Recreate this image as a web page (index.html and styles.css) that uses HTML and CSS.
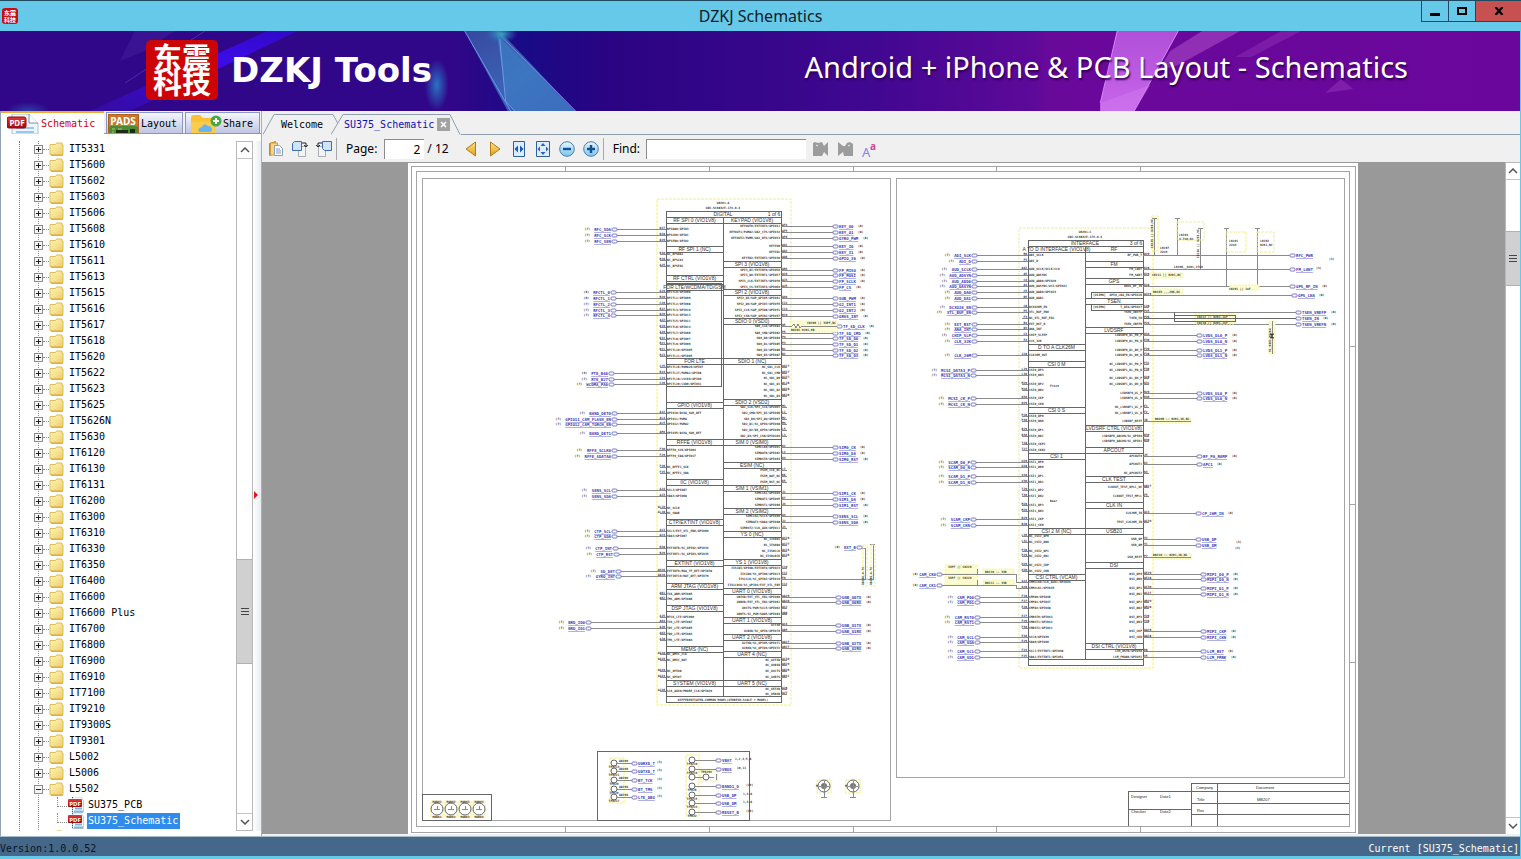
FILE: index.html
```html
<!DOCTYPE html>
<html lang="en">
<head>
<meta charset="utf-8">
<title>DZKJ Schematics</title>
<link rel="stylesheet" href="styles.css">
</head>
<body>
<svg class="defs" aria-hidden="true">
  <defs>
    <linearGradient id="fold" x1="0" y1="0" x2="1" y2="1"><stop offset="0" stop-color="#fff6c4"/><stop offset="1" stop-color="#f0cd62"/></linearGradient>
    <linearGradient id="gold" x1="0" y1="0" x2="0" y2="1"><stop offset="0" stop-color="#fbe08a"/><stop offset="1" stop-color="#dfa21c"/></linearGradient>
    <linearGradient id="sky" x1="0" y1="0" x2="0" y2="1"><stop offset="0" stop-color="#e8f6fd"/><stop offset="1" stop-color="#7cc4ee"/></linearGradient>
    <linearGradient id="red" x1="0" y1="0" x2="0" y2="1"><stop offset="0" stop-color="#e0383c"/><stop offset="1" stop-color="#a00810"/></linearGradient>
  </defs>
  <symbol id="i-folder" viewBox="0 0 15 14"><path d="M1 2.500h5.500l1-1.500h5.500v2h1v9.500h-13z" fill="url(#fold)" stroke="#e0bd55"/><path d="M2 13.500h12" stroke="#d9b44a"/></symbol>
  <symbol id="i-pdf" viewBox="0 0 16 16"><path d="M4.500 0v15.500h11v-12l-3-3.500z" fill="#fff" stroke="#b8d4e8"/><path d="M7 11.500h7M6 14.500h9" stroke="#7fb2dc" stroke-width="2"/><path d="M4.500 0v15" stroke="#555" stroke-dasharray="1 1"/><rect x="0" y="2" width="14" height="8" rx="1" fill="url(#red)"/><text x="7" y="9" font-size="6" font-weight="bold" text-anchor="middle" fill="#fff" font-family="Noto Sans">PDF</text></symbol>
  <symbol id="i-up" viewBox="0 0 10 6"><path d="M1 5l4-4 4 4" fill="none" stroke="#555" stroke-width="1.500"/></symbol>
</svg>

<div class="app">
  <header class="titlebar">
    <span class="mini-logo"><span>东震</span><span>科技</span></span>
    <h1 class="title">DZKJ Schematics</h1>
    <div class="winbtns">
      <button class="wb" aria-label="Minimize"><svg width="10" height="10"><path d="M0 7h10v3H0z"/></svg></button>
      <button class="wb wb-max" aria-label="Maximize"><svg width="10" height="8"><path d="M1 1h8v6H1z" fill="none" stroke="#000" stroke-width="2"/></svg></button>
      <button class="wb wb-close" aria-label="Close"><svg width="10" height="8"><path d="M1.500 0l7 8M8.500 0l-7 8" stroke="#000" stroke-width="2.200"/></svg></button>
    </div>
  </header>

  <div class="banner">
    <svg class="banner-art" viewBox="0 0 1521 80" preserveAspectRatio="none" aria-hidden="true">
      <defs>
        <linearGradient id="bg"><stop offset="0" stop-color="#300788"/><stop offset=".3" stop-color="#300788"/><stop offset=".345" stop-color="#190a86"/><stop offset=".4" stop-color="#2a0482"/><stop offset=".5" stop-color="#36068a"/><stop offset=".57" stop-color="#400790"/><stop offset=".68" stop-color="#5d0999"/><stop offset=".69" stop-color="#69099a"/><stop offset="1" stop-color="#6a069c"/></linearGradient>
        <linearGradient id="beam" x1="1" y1="0" x2="0" y2="1"><stop offset="0" stop-color="#3208c4"/><stop offset=".35" stop-color="#3b0ce6"/><stop offset="1" stop-color="#340ba0"/></linearGradient>
        <linearGradient id="tri" x1="0" y1="0" x2="1" y2="1"><stop offset="0" stop-color="#36489e"/><stop offset=".55" stop-color="#3c63b6"/><stop offset="1" stop-color="#3b3fa6"/></linearGradient>
        <linearGradient id="pink" x1="0" y1="0" x2="0" y2="1"><stop offset="0" stop-color="#b04fd8"/><stop offset="1" stop-color="#c765ea"/></linearGradient>
        <radialGradient id="glow"><stop offset="0" stop-color="#2a72c4"/><stop offset="1" stop-color="#2a72c4" stop-opacity="0"/></radialGradient>
        <radialGradient id="teal"><stop offset="0" stop-color="#38a8b8"/><stop offset="1" stop-color="#2a72c4" stop-opacity="0"/></radialGradient>
      </defs>
      <rect width="1521" height="80" fill="url(#bg)"/>
      <path d="M268 0h30L130 80H90z" fill="url(#beam)"/>
      <path d="M135 0h40l-30 20-25 10z" fill="#3f1c9a" opacity=".6"/>
      <path d="M205 0L125 52" stroke="#5a3cb4" opacity=".7"/>
      <ellipse cx="28" cy="80" rx="22" ry="9" fill="url(#glow)" opacity=".5"/>
      <ellipse cx="437" cy="54" rx="12" ry="26" fill="url(#glow)"/>
      <path d="M465 0h35l76 80h-68z" fill="url(#tri)"/>
      <path d="M497 0l10 70 8 10h60L500 6z" fill="#3d7cc4" opacity=".75"/>
      <path d="M465 0l46 80M500 4l76 76M500 8l6 62 9 10" stroke="#6d9be8" fill="none"/>
      <ellipse cx="502" cy="3" rx="16" ry="9" fill="url(#teal)"/>
      <path d="M1118 0h61l-44 80h-34v-8z" fill="url(#pink)"/>
      <path d="M1118 0l-17 72M1179 0l-44 80" stroke="#d886f4" fill="none"/>
      <path d="M1101 72l50-18-16 26h-34z" fill="#d27af0" opacity=".5"/>
      <path d="M1203 0h38l-62 34-20 6 12-20z" fill="#9a38bc" opacity=".8"/>
      <path d="M1282 0h20l-50 26h-16z" fill="#8424ae" opacity=".7"/>
      <path d="M1342 48l12 10-28 4z" fill="#8a28b4" opacity=".7"/>
    </svg>
    <div class="brand">
      <div class="logo" lang="zh"><span>东震</span><span>科技</span></div>
      <strong class="brand-name">DZKJ Tools</strong>
    </div>
    <p class="tagline">Android + iPhone &amp; PCB Layout - Schematics</p>
  </div>

  <main class="main">
    <aside class="side">
      <div class="modes" role="tablist">
        <button class="mode mode-on" role="tab" aria-selected="true">
          <svg width="32" height="20" viewBox="0 0 32 20"><path d="M5 0h17l9 9v11H5z" fill="#eef6fc" stroke="#a9c4da"/><path d="M22 0v9h9" fill="#fff" stroke="#6f94b4"/><path d="M9 14h18M9 18h18" stroke="#9ac8ea" stroke-width="2"/><rect x="0" y="3" width="19" height="11" rx="2" fill="url(#red)" stroke="#8c0c10"/><text x="10" y="12" font-size="8" font-weight="bold" text-anchor="middle" fill="#fff" font-family="Noto Sans">PDF</text></svg>
          Schematic</button>
        <button class="mode mode-pads" role="tab">
          <svg width="31" height="20" viewBox="0 0 31 20"><rect width="31" height="20" fill="#b5601c"/><rect x="1" y="1" width="29" height="12" fill="#c8772a"/><rect x="2" y="12" width="27" height="8" fill="#4d8a34"/><path d="M8 20v-4h12v4zM22 15h5v4h-5z" fill="#1e2c1a"/><path d="M4 15h3M10 15h4M4 18h2" stroke="#a8d070"/><text x="15" y="11" font-size="10" font-weight="bold" text-anchor="middle" fill="#fff" font-family="Noto Sans">PADS</text></svg>
          Layout</button>
        <button class="mode mode-share" role="tab">
          <svg width="32" height="20" viewBox="0 0 32 20"><path d="M1 4q0-3 3-3h6l3 3h10q3 0 3 3v13H1z" fill="#f8c136"/><path d="M1 8l25-1v13H1z" fill="#fbcb4c"/><path d="M9 18q-2-4 3-5 2-5 6-1 4 0 4 4 0 2-2 2z" fill="#68b4f0"/><circle cx="26" cy="7" r="5.500" fill="#46a83e"/><path d="M26 4v6M23 7h6" stroke="#fff" stroke-width="2"/></svg>
          Share</button>
      </div>
      <div class="treebox">
        <ul class="tree" id="tree" role="tree"></ul>
        <div class="scroll">
          <button class="sb" aria-label="Scroll up"><svg width="10" height="6"><use href="#i-up"/></svg></button>
          <div class="track"><div class="before-tree"></div><div class="thumb thumb-tree"><i></i><i></i><i></i></div><div class="after-tree"></div></div>
          <button class="sb" aria-label="Scroll down"><svg class="flip" width="10" height="6"><use href="#i-up"/></svg></button>
        </div>
        <div class="splitter"><svg width="5" height="8"><path d="M1 0l4 4-4 4z" fill="#e01818"/></svg></div>
      </div>
    </aside>

    <section class="work">
      <div class="docs" role="tablist">
        <button class="doc" role="tab">
          <svg class="doc-edge" viewBox="0 0 76 21" preserveAspectRatio="none"><path d="M0 20.500l11-20h59l6 11" fill="#f0f0f0" stroke="#8f9fae"/></svg>
          <span>Welcome</span></button>
        <button class="doc doc-on" role="tab" aria-selected="true">
          <svg class="doc-edge" viewBox="0 0 130 21" preserveAspectRatio="none"><path d="M0 20.500l12-20h107l10 20" fill="#f0f0f0" stroke="#8f9fae"/></svg>
          <span>SU375_Schematic</span><i class="doc-x"><svg width="7" height="7"><path d="M1 1l5 5M6 1l-5 5" stroke="#fff" stroke-width="1.500"/></svg></i></button>
        <div class="doc-fill"></div>
      </div>
      <div class="tools">
        <button class="tool" aria-label="Open"><svg width="16" height="16"><path d="M1.500 2.500l6-2v12l-6 2z" fill="#f1bd5a" stroke="#c88a2c"/><path d="M2.500 2h7v12h-7z" fill="#f8d384" stroke="#d09a3c"/><path d="M6.500 4.500h5l3 3v7h-8z" fill="#fff" stroke="#8e9cb4"/><path d="M8 8h4M8 10h5M8 12h5" stroke="#7c96c0"/></svg></button>
        <button class="tool" aria-label="Rotate right"><svg width="16" height="16"><path d="M6.500 5.500h7v10h-7z" fill="#f4f4f4" stroke="#a8acb4"/><path d="M.500 2.500l2-2h7v9h-9z" fill="#cfe4f8" stroke="#3d6fae"/><path d="M10 2h4v3M12 4l2 2 2-2" fill="none" stroke="#222"/></svg></button>
        <button class="tool" aria-label="Rotate left"><svg width="16" height="16"><path d="M2.500 5.500h7v10h-7z" fill="#f4f4f4" stroke="#a8acb4"/><path d="M6.500 .500h9v9h-7l-2-2z" fill="#cfe4f8" stroke="#3d6fae"/><path d="M6 2H2v3M0 4l2 2 2-2" fill="none" stroke="#222"/></svg></button>
        <span class="sep"></span>
        <label class="lbl" for="pg">Page:</label>
        <input class="in in-page" id="pg" value="2">
        <span class="lbl of">/ 12</span>
        <button class="tool" aria-label="Previous page"><svg width="12" height="16"><path d="M10.500 1v14L1 8z" fill="url(#gold)" stroke="#b07d14"/></svg></button>
        <button class="tool" aria-label="Next page"><svg width="12" height="16"><path d="M1.500 1v14L11 8z" fill="url(#gold)" stroke="#b07d14"/></svg></button>
        <button class="tool" aria-label="Fit width"><svg width="14" height="16"><path d="M1.500 .500h11v15h-11z" fill="#dcecfa" stroke="#2f5f9e"/><path d="M6 4.500v7L2.500 8zM8 4.500v7L11.500 8z" fill="#1c58b0"/></svg></button>
        <button class="tool" aria-label="Fit page"><svg width="14" height="16"><path d="M.500 .500h13v15H.500z" fill="#dcecfa" stroke="#2f5f9e"/><path d="M7 2l2.500 3h-5zM7 14l2.500-3h-5zM1.500 8l2.500-2.500v5zM12.500 8L10 5.500v5z" fill="#2a62b4"/></svg></button>
        <button class="tool" aria-label="Zoom out"><svg width="16" height="16"><circle cx="8" cy="8" r="7.300" fill="url(#sky)" stroke="#4a7fae"/><path d="M4 8h8" stroke="#0f4f96" stroke-width="2.400"/></svg></button>
        <button class="tool" aria-label="Zoom in"><svg width="16" height="16"><circle cx="8" cy="8" r="7.300" fill="url(#sky)" stroke="#4a7fae"/><path d="M4 8h8M8 4v8" stroke="#0f4f96" stroke-width="2.400"/></svg></button>
        <span class="sep"></span>
        <label class="lbl" for="find">Find:</label>
        <input class="in in-find" id="find">
        <button class="tool" aria-label="Find previous"><svg width="16" height="16"><path d="M0 2l2-1 3 1 4-1 2 4 4-4v14l-4-4-2 4H0z" fill="#9c9c9c"/><path d="M3 4l2 1" stroke="#f0f0f0"/></svg></button>
        <button class="tool" aria-label="Find next"><svg width="16" height="16"><path d="M16 3l-3-2-3 1-2 3-2 0-5-4v14l5-4 1 4h9z" fill="#9c9c9c"/><path d="M11 5l2-1" stroke="#f0f0f0"/></svg></button>
        <button class="tool" aria-label="Match case"><svg width="18" height="18"><text x="1" y="16" font-size="13" fill="#8a80e8" font-family="Noto Sans">A</text><text x="9" y="9" font-size="10" font-weight="bold" fill="#c8489c" font-family="Noto Sans">a</text></svg></button>
      </div>
      <div class="view">
        <div class="canvas"><svg class="sheet" id="sheet" viewBox="408 163 950 671" role="img" aria-label="SU375 schematic, page 2"></svg></div>
        <div class="scroll scroll-doc">
          <button class="sb" aria-label="Page up"><svg width="10" height="6"><use href="#i-up"/></svg></button>
          <div class="track"><div class="before-doc"></div><div class="thumb thumb-doc"><i></i><i></i><i></i></div><div class="after-doc"></div></div>
          <button class="sb" aria-label="Page down"><svg class="flip" width="10" height="6"><use href="#i-up"/></svg></button>
        </div>
      </div>
    </section>
  </main>

  <footer class="status"><span>Version:1.0.0.52</span><span class="cur">Current [SU375_Schematic]</span></footer>
</div>
<script src="sheet.js"></script>
</body>
</html>
```

FILE: styles.css
```css
* { box-sizing: border-box; }
body { margin: 0; font: 10px/16px "DejaVu Sans Mono", monospace; color: #000; background: #66c9e9; }
button { font: inherit; color: inherit; border: 0; padding: 0; margin: 0; background: none; }
svg { display: block; flex: none; }
.defs { position: absolute; width: 0; height: 0; }
.app { height: 100vh; display: flex; flex-direction: column; border-bottom: 3px solid #66c9e9; }

.titlebar { height: 31px; flex: none; display: flex; align-items: center; border-top: 1px solid #1d4a60; background: #66c9e9; }
.mini-logo { width: 16px; height: 16px; margin-left: 2px; border-radius: 3px; background: #c80c10; color: #fff; display: flex; flex-direction: column; align-items: center; justify-content: center; font: bold 6px/7px "Noto Sans CJK SC", sans-serif; }
.title { flex: 1; margin: 0 0 0 82px; text-align: center; font: 400 16px/22px "Noto Sans", sans-serif; color: #0d1c28; }
.winbtns { display: flex; align-self: flex-start; height: 21px; }
.wb { width: 28px; display: grid; place-items: center; border: 1px solid #1d4a60; border-top: 0; }
.wb-max { width: 27px; border-left: 0; }
.wb-close { width: 45px; background: #c75050; border-left: 0; border-right: 0; }

.banner { position: relative; height: 80px; flex: none; display: flex; justify-content: space-between; align-items: center; margin-right: 1px; padding: 0 112px 2px 146px; color: #fff; }
.banner-art { position: absolute; inset: 0; width: 100%; height: 100%; }
.brand { position: relative; display: flex; align-items: center; gap: 13px; }
.logo { width: 72px; height: 60px; border-radius: 5px; background: #cc0406; display: flex; flex-direction: column; align-items: center; justify-content: center; font: bold 29px/25px "Noto Sans CJK SC", sans-serif; padding-bottom: 2px; }
.brand-name { font: bold 34px/44px "DejaVu Sans", sans-serif; }
.tagline { position: relative; margin: 0 0 6px; font: 400 29px/40px "Noto Sans", sans-serif; text-shadow: 1px 2px 2px #300050; }

.main { flex: 1; min-height: 0; display: flex; margin-right: 1px; background: #f0f0f0; }
.side { width: 261px; flex: none; display: flex; flex-direction: column; border-left: 1px solid #8ea3b5; }
.modes { height: 23px; display: flex; align-items: flex-end; gap: 2px; border-bottom: 1px solid #8a98b0; }
.mode { height: 21px; display: flex; align-items: center; gap: 2px; overflow: hidden; border: 1px solid #8a98c0; border-bottom: 0; background: linear-gradient(#f4f5fc, #c0c6e2); padding: 2px 4px 0 1px; }
.mode-on { height: 23px; width: 103px; margin-bottom: -1px; color: #c80014; background: #fff; border: 0; border-top: 2px solid #eeab32; padding: 1px 0 0 6px; }
.mode-pads { width: 77px; gap: 2px; }
.mode-share { width: 75px; padding-left: 4px; gap: 1px; }
.treebox { flex: 1; min-height: 0; display: flex; background: #fff; padding: 7px 0 5px; }
.tree { flex: 1; min-width: 0; margin: 0 0 0 18px; padding: 0; list-style: none; overflow: hidden; border-left: 1px dotted #777; }
.row { height: 16px; display: flex; align-items: center; margin-left: 14px; background: linear-gradient(#888 50%, transparent 0) 4px 0 / 1px 2px repeat-y; }
.exp { width: 9px; height: 9px; line-height: 0; border: 1px solid #8c8c8c; background: #f4f4f4; display: grid; place-items: center; }
.dash { width: 6px; border-top: 1px dotted #888; }
.row .name { margin-left: 4px; height: 16px; line-height: 16px; padding: 0 1px; }
.leaf .stub { width: 42px; padding-left: 23px; height: 16px; }
.stub::after { content: ""; display: block; height: 9px; width: 11px; border-left: 1px dotted #888; border-bottom: 1px dotted #888; margin-bottom: 7px; }
.leaf .icon { margin-left: -8px; }
.leaf .name { margin-left: 3px; }
.row .picked { padding-right: 2px; background: #2f8bec; color: #fff; outline: 1px dotted #c46a10; outline-offset: -1px; }
.scroll { width: 17px; flex: none; display: flex; flex-direction: column; background: #fff; border: 1px solid #b8b8b8; }
.sb { height: 16px; display: grid; place-items: center; background: #fff; }
.flip { transform: rotate(180deg); }
.track { flex: 1; display: flex; flex-direction: column; border: 1px solid #c4c4c4; border-width: 1px 0; }
.before-tree { flex: 402; }
.after-tree { flex: 150; }
.before-doc { flex: 52; }
.after-doc { flex: 538; }
.thumb { background: #d0d0d0; border: 1px solid #b0b0b0; border-width: 1px 0; display: flex; flex-direction: column; align-items: center; justify-content: center; gap: 2px; }
.thumb i { width: 8px; height: 1px; background: #444; }
.thumb-tree { flex: 104; }
.thumb-doc { flex: 53; }
.splitter { width: 8px; flex: none; display: grid; place-items: start; align-items: center; padding-top: 18px; background: linear-gradient(90deg, #fff, #e8ecf0); }

.work { flex: 1; min-width: 0; display: flex; flex-direction: column; border-left: 1px solid #a8b0b8; }
.docs { height: 24px; flex: none; display: flex; align-items: flex-end; padding-left: 1px; }
.doc { position: relative; width: 68px; height: 21px; padding-left: 18px; text-align: left; white-space: nowrap; }
.doc span, .doc-x { position: relative; }
.doc-edge { position: absolute; left: 0; top: 0; width: 76px; height: 21px; }
.doc-on { width: 130px; padding-left: 13px; color: #0a10b4; display: flex; align-items: center; gap: 3px; }
.doc-on .doc-edge { width: 130px; }
.doc-x { width: 13px; height: 13px; background: #a2a2a2; display: grid; place-items: center; }
.doc-fill { flex: 1; border-bottom: 1px solid #8f9fae; }
.tools { height: 27px; flex: none; display: flex; align-items: center; gap: 8px; padding: 0 6px; font: 12px/18px "Noto Sans", sans-serif; }
.tool { width: 16px; height: 16px; display: grid; place-items: center; }
.sep { width: 1px; height: 22px; margin-left: -4px; background: #a9a9a9; }
.in { height: 20px; border: 0; border-top: 1px solid #8c8c8c; border-left: 1px solid #8c8c8c; background: #fff; font: inherit; padding: 0 4px; outline: 0; }
.in-page { width: 40px; text-align: right; margin-left: -1px; }
.in-find { width: 160px; margin: 0 -1px 0 -2px; }
.of { margin: 0 6px 0 -5px; white-space: nowrap; }
.sep + .lbl { margin-left: 1px; }
.view { flex: 1; min-height: 0; display: flex; background: #999; margin-bottom: 2px; }
.canvas { flex: 1; min-width: 0; display: flex; justify-content: center; padding: 1px 2px 0 0; }
.sheet { height: 100%; max-width: 100%; background: #fff; font-family: "DejaVu Sans Mono", monospace; }
.scroll-doc { width: 15px; border-width: 1px 0 0 1px; }

.frame { fill: none; stroke: #a4a4a4; shape-rendering: crispEdges; }
.dark { stroke: #666; }
.smooth { shape-rendering: auto; }
.wire { fill: none; stroke: #8a8a8a; shape-rendering: crispEdges; }
.hot { fill: none; stroke: #f0f08c; stroke-dasharray: 3 1; }
.mark { fill: #fcfcd0; stroke: #f4f4a8; stroke-dasharray: 2 1; }
.head { font: 5px "Liberation Sans", sans-serif; fill: #333; text-anchor: middle; }
.pin { font-size: 3px; font-weight: bold; fill: #333; }
.net { font-size: 4px; font-weight: bold; fill: #3a3ab4; text-decoration: underline; }
.tag { fill: #fff; stroke: #7c7cc8; }
.end { text-anchor: end; }
.mid { text-anchor: middle; }
.sign { font: 4px "Liberation Sans", sans-serif; fill: #222; }

.status { height: 20px; flex: none; display: flex; justify-content: space-between; align-items: center; margin-right: 1px; padding: 5px 1px 0 0; border-top: 1px solid #a8bccb; background: #456789; color: #0a1420; }
.cur { color: #fff; }
```

FILE: sheet.js
```js
// Tree of device folders
const folders = "IT5331,IT5600,IT5602,IT5603,IT5606,IT5608,IT5610,IT5611,IT5613,IT5615,IT5616,IT5617,IT5618,IT5620,IT5622,IT5623,IT5625,IT5626N,IT5630,IT6120,IT6130,IT6131,IT6200,IT6300,IT6310,IT6330,IT6350,IT6400,IT6600,IT6600 Plus,IT6700,IT6800,IT6900,IT6910,IT7100,IT9210,IT9300S,IT9301,L5002,L5006,L5502".split(",");
const folderRow = (name, open) => `<li class="row" role="treeitem"><button class="exp" aria-label="Toggle"><svg width="7" height="7"><path d="M1 3.5h5${open ? "" : "M3.5 1v5"}" stroke="#222"/></svg></button><span class="dash"></span><svg width="15" height="14"><use href="#i-folder"/></svg><span class="name">${name}</span></li>`;
const fileRow = (name, on) => `<li class="row leaf" role="treeitem"><span class="stub"></span><svg class="icon" width="16" height="16"><use href="#i-pdf"/></svg><span class="name${on ? " picked" : ""}">${name}</span></li>`;
document.getElementById("tree").innerHTML =
  folders.map(n => folderRow(n, n === "L5502")).join("") +
  fileRow("SU375_PCB") + fileRow("SU375_Schematic", true) + folderRow("");

// Schematic sheet
const out = [];
const path = (d, c) => out.push(`<path class="${c}" d="${d}"/>`);
const box = (x, y, x2, y2, c = "frame") => out.push(`<rect class="${c}" x="${x}" y="${y}" width="${x2 - x}" height="${y2 - y}"/>`);
const text = (x, y, s, c) => out.push(`<text class="${c}" x="${x}" y="${y}">${s}</text>`);
const ring = (x, y, r) => out.push(`<circle class="frame dark smooth" cx="${x}" cy="${y}" r="${r}"/>`);
const vtext = (x, y, s) => out.push(`<text class="pin" transform="translate(${x} ${y}) rotate(-90)">${s}</text>`);
const tag = (x, y) => out.push(`<rect class="tag" x="${x}" y="${y - 1}" width="5" height="3" rx="1"/>`);
const span = s => Math.ceil(s.length * 2.41);

box(411, 166, 1355, 832); box(416, 171, 1349, 826);
box(422, 178, 890, 820); box(896, 178, 1344, 777);
for (const x of [565, 709, 853, 996, 1140]) path(`M${x} 166v5M${x} 826v6`, "frame");
for (const y of [346, 504, 662]) path(`M1349 ${y}h6`, "frame");

function chip(o) {
  const { x, x2, mid, top, end } = o;
  box(x - 9, top - 12, x2 + 10, end + 3, "hot");
  text(mid, top - 7, o.ref, "pin mid"); text(mid, top - 2, o.part, "pin mid");
  box(x, top, x2, end, "frame dark");
  path(`M${x} ${top + 6}H${x2}M${mid} ${top + 6}V${end - 6}M${x} ${end - 6}H${x2}`, "frame dark");
  text(mid, top + 5, o.name, "head"); text(x2 - 7, top + 5, o.count, "head");
  for (const [side, list] of [["L", o.headsL], ["R", o.headsR]])
    for (const [y, s] of list) {
      const a = side === "L" ? x : mid, b = side === "L" ? mid : x2;
      box(a, y - 3, b, y + 3, "frame dark"); text((a + b) / 2, y + 2, s, "head");
    }
  for (const [y, label, ball, net, tx, page] of o.left) {
    text(x + 1, y + 1, label, "pin"); text(x - 1, y, ball, "pin end");
    path(`M${net ? tx + 5 : x - 6} ${y}H${x}`, "wire");
    if (net) { tag(tx, y); text(tx - 1, y + 2, net, "net end"); text(tx - 5 - span(net), y + 1, page || "(7)", "pin end"); }
  }
  for (const [y, label, ball, net, tx, page] of o.right) {
    text(x2 - 1, y + 1, label, "pin end"); text(x2 + 1, y, ball, "pin");
    path(`M${x2} ${y}H${net ? tx : x2 + 6}`, "wire");
    if (net) { tag(tx, y); text(tx + 6, y + 2, net, "net"); text(tx + 10 + span(net), y + 1, page || "(8)", "pin"); }
  }
}

chip({
  x: 666, x2: 781, mid: 723, top: 211, end: 702, ref: "U0201-A", part: "UDC-SC9832E-174-0.4", name: "DIGITAL", count: "1 of 6",
  headsL: [[220, "RF SPI 0 (VIO1V8)"], [249, "RF SPI 1 (NC)"], [278, "RF CTRL (VIO1V8)"], [287, "FOR LTE/WCDMA/TD/GSM"], [361, "FOR LTE"], [405, "GPIO (VIO1V8)"], [442, "RFFE (VIO1V8)"], [482, "IIC (VIO1V8)"], [522, "CTP/EXTINT (VIO1V8)"], [563, "EXTINT (VIO1V8)"], [586, "ARM JTAG (VIO1V8)"], [608, "DSP JTAG (VIO1V8)"], [649, "MEMS (NC)"], [683, "SYSTEM (VIO1V8)"]],
  headsR: [[220, "KEYPAD (VIO1V8)"], [264, "SPI 3 (VIO1V8)"], [292, "SPI 2 (VIO1V8)"], [321, "SDIO 0 (VSD0)"], [361, "SDIO 1 (NC)"], [402, "SDIO 2 (VSD2)"], [442, "SIM 0 (VSIM0)"], [465, "ESIM (NC)"], [488, "SIM 1 (VSIM1)"], [511, "SIM 2 (VSIM2)"], [534, "YS 0 (NC)"], [562, "YS 1 (VIO1V8)"], [591, "UART 0 (VIO1V8)"], [620, "UART 1 (VIO1V8)"], [637, "UART 2 (VIO1V8)"], [654, "UART 4 (NC)"], [683, "UART 5 (NC)"]],
  left: [[229, "RFSDA0/GPIO3", "D27", "RFC_SDA", 612], [235, "RFSCK0/GPIO1", "D28", "RFC_SCK", 612], [241, "RFSEN0/GPIO2", "D29", "RFC_SEN", 612], [254, "NC_RFSDA1", "B30"], [260, "NC_RFSCK1", "B28"], [266, "NC_RFSEN1", "A25"], [292, "RFCTL0/GPIO06", "A19", "RFCTL_0", 611, "(6)"], [298, "RFCTL1/GPIO09", "B20", "RFCTL_1", 611, "(6)"], [304, "RFCTL2/GPIO08", "C20", "RFCTL_2", 611], [310, "RFCTL3/GPIO10", "B22", "RFCTL_3", 611], [315, "RFCTL4/GPIO13", "D20", "RFCTL_4", 611], [321, "RFCTL5/GPIO11", "A22"], [327, "RFCTL6/GPIO14", "D19"], [333, "RFCTL7/GPIO06", "A20"], [339, "RFCTL8/GPIO07", "D22"], [344, "RFCTL9/GPIO09", "B21"], [350, "RFCTL10/GPIO05", "D21"], [356, "RFCTL11/GPIO05", "B23"], [367, "RFCTL16/PWMA20/GPIO7", "C25"], [373, "RFCTL17/PWMA2/GPIO8", "B24", "PTE_B40", 609, "(9)"], [379, "RFCTL18/LVCK0/GPIO9", "C24", "RTE_B27", 609], [384, "RFCTL20/LVD0/GPIO31", "C26", "WCDMA_PA0", 609], [413, "GPIO10/DCXA_SWH_DET", "A22", "BAND_DET0", 612], [419, "GPIO11/PWMA", "AL4", "GPIO11_CAM_FLASH_EN", 612], [424, "GPIO12/PWMA2", "AL5", "GPIO12_CAM_TORCH_EN", 612], [433, "GPIO35/DCXA_SWH_DET", "AM4", "BAND_DET1", 612], [450, "RFFE0_SCK/GPIO04", "F30", "RFFE_SCLK0", 612], [456, "RFFE0_SDA/GPIO17", "F29", "RFFE_SDATA0", 612], [467, "NC_RFFE1_SCK", "F26"], [473, "NC_RFFE1_SDA", "F25"], [490, "SCL3/GPIO67", "AJ4", "SENS_SCL", 612], [496, "SDA3/GPIO68", "AJ3", "SENS_SDA", 612], [508, "NC_SCL6", "AL29"], [513, "NC_SDA6", "AL28"], [531, "SCL3/EXT_XTL_EN0/GPIO69", "AC3", "CTP_SCL", 612], [536, "SDA3/GPIO67", "AC4", "CTP_SDA", 612], [548, "EXTINT0/SC_GPIO2/GPIO34", "B28", "CTP_INT", 613], [554, "EXTINT1/SC_GPIO3/GPIO35", "B29", "CTP_RST", 614], [571, "EXTINT9/BUA_TF_DET/GPIO78", "AH26", "SD_DET", 616], [576, "EXTINT10/BAT_DET/GPIO79", "AD28", "GYRO_INT", 616], [594, "TCK_ARM/GPIO85", "AK1"], [599, "TMS_ARM/GPIO86", "AK2"], [617, "MTCK_LTE/GPIO90", "AJ5"], [622, "TCK_LTE/GPIO87", "AK4", "BRD_ID0", 586], [628, "TDI_LTE/GPIO85", "AJ6", "BRD_ID1", 586], [634, "TDO_LTE/GPIO83", "AG3"], [640, "TMS_LTE/GPIO84", "AJ8"], [654, "NC_DMIC_CLK", "AG28"], [660, "NC_DMIC_DAT", "AG29"], [671, "NC_GPIO8", "AG29"], [677, "NC_GPIO7", "AG24"], [691, "CLK_AUX0/PROBE_CLK/GPIO29", "AJ26"]],
  right: [[226, "KEYOUT0/EXTINT3/GPIO31", "AF4", "KEY_O0", 833], [232, "KEYOUT1/PWMA2/UA2_CTS/GPIO32", "AF5", "KEY_O1", 833], [238, "KEYOUT2/PWMB/UA2_RTS/GPIO33", "AF6", "GYRO_PWM", 833], [246, "KEYIN0", "AG1", "KEY_I0", 833], [252, "KEYIN1", "AG2", "KEY_I1", 833], [258, "KEYIN2/EXTINT2/GPIO30", "AG6", "GPIO_30", 833], [270, "SPI3_DI/EXTINT0/GPIO56", "AB5", "FP_MISO", 833], [275, "SPI3_DO/EXTINT1/GPIO57", "A10", "FP_MOSI", 833], [281, "SPI3_CLK/EXTINT3/GPIO59", "AJ3", "FP_SCLK", 833], [287, "SPI3_CS/EXTINT4/GPIO60", "AJ5", "FP_CS", 833], [298, "SPI2_DI/SWP_GPIO5/GPIO61", "AH4", "SUB_PWM", 833], [304, "SPI2_DO/SWP_GPIO7/GPIO55", "C12", "G2_INT1", 833], [310, "SPI2_CLK/SWP_GPIO8/GPIO51", "C13", "G2_INT2", 833], [316, "SPI2_CSN/SWP_GPIO2/GPIO57", "B19", "GRVS_INT", 833], [326, "SD0_CLK/GPIO83", "N5", "TF_SD_CLK", 837], [333, "SD0_CMD/GPIO82", "P5", "TF_SD_CMD", 833], [338, "SD0_D0/GPIO84", "P4", "TF_SD_D0", 833], [344, "SD0_D1/GPIO85", "P3", "TF_SD_D1", 833], [350, "SD0_D2/GPIO86", "R1", "TF_SD_D2", 833], [355, "SD0_D3/GPIO87", "R2", "TF_SD_D3", 833], [367, "NC_SD1_CLK", "AG27"], [373, "NC_SD1_CMD", "AH27"], [378, "NC_SD1_D0", "AJ27"], [384, "NC_SD1_D1", "AL28"], [390, "NC_SD1_D2", "AG28"], [396, "NC_SD1_D3", "AK28"], [407, "SD2_CLK/SPI_CLK/GPIO95", "M3"], [413, "SD2_CMD/SPI_DI/GPIO96", "L1"], [419, "SD2_D0/SPI_DO/GPIO97", "M2"], [424, "SD2_D1/SC_GPIO/GPIO98", "M4"], [430, "SD2_D2/DX_GPIO/GPIO99", "L5"], [436, "SD2_D3/SPI_CSN/GPIO100", "L3"], [447, "SIMCLK0/GPIO01", "K2", "SIM0_CK", 833], [453, "SIMDAT0/GPIO02", "L2", "SIM0_DA", 833], [459, "SIMRST0/GPIO03", "K4", "SIM0_RST", 833], [470, "ESIM_CLK_NC", "L7"], [476, "ESIM_DAT_NC", "K6"], [482, "ESIM_RST_NC", "K5"], [493, "SIMCLK1/GPIO04", "J1", "SIM1_CK", 833], [499, "SIMDAT1/GPIO05", "K7", "SIM1_DA", 833], [505, "SIMRST1/GPIO06", "J4", "SIM1_RST", 833], [516, "SIMCLK2/SCL4/GPIO09", "G4", "SENS_SCL", 833], [522, "SIMDAT2/SDA4/GPIO08", "J2", "SENS_SDA", 833], [528, "SIMRST2/CLK_AUX/GPIO11", "J3"], [539, "NC_IIS0DI", "AC29"], [545, "NC_IIS0DO", "AC27"], [551, "NC_IIS0CLK", "AC24"], [556, "NC_IIS0LRCK", "AC26"], [568, "IIS1DI/GPIO8/EXTINT4/GPIO23", "C10"], [574, "IIS1DO/SC_GPIO9/GPIO13", "C11"], [579, "IIS1CLK/SC_GPIO2/GPIO10", "E9"], [585, "IIS1LRCK/SC_GPIO3/EXT_XTL_EN5", "C12"], [597, "U0TXD/EXT_XTL_EN1/GPIO60", "AA29", "UAB_U0TX", 836], [602, "U0RXD/EXT_XTL_EN2/GPIO61", "AA28", "UAB_U0RX", 836], [608, "U0CTS/PWM/SCL5/GPIO62", "AC2"], [614, "U0RTS/SC_PWM/SDA5/GPIO64", "AD8"], [625, "U1TXD", "AC4", "UAB_U1TX", 836], [631, "U1RXD/SC_GPIO/GPIO70", "AD5", "UAB_U1RX", 836], [643, "U2TXD/SC_GPIO5/GPIO71", "AA27", "UAB_U2TX", 836], [648, "U2RXD/SC_GPIO4/GPIO72", "AB27", "UAB_U2RX", 836], [660, "NC_U4TXD", "AC30"], [665, "NC_U4RXD", "AK29"], [671, "NC_U4CTS", "AD29"], [677, "NC_U4RTS", "AD31"], [689, "NC_U5TXD", "A28"], [694, "NC_U5RXD", "A27"]]
});
text(723, 701, "DIFFERENTIATED-COMMON MODEL(UTHRESH-SCALE = MODEL)", "pin mid");
box(666, 283, 721, 386, "frame dark");
box(790, 321, 837, 332, "mark"); text(807, 324, "C0209 || 33PF,NC", "pin"); text(791, 331, "R0202  0201,0R", "pin");
path("M781 326h11l2 -2l2 4l2 -4l2 4l2 -2h35M781 579h92v-35M865 548v31M857 548h8M870 544h5", "wire");
box(863, 545, 867, 586, "hot"); box(871, 545, 875, 586, "hot");
vtext(864, 585, "R0208,4.7K"); vtext(872, 585, "R0209,4.7K");
tag(857, 547); text(856, 549, "EXT_B", "net end"); text(840, 548, "(8)", "pin end");

chip({
  x: 1028, x2: 1143, mid: 1085, top: 240, end: 665, ref: "U0201-C", part: "UDC-SC9832E-174-0.4", name: "INTERFACE", count: "3 of 6",
  headsL: [[249, "A TO D INTERFACE (VIO1V8)"], [347, "D TO A CLK26M"], [364, "CSI 0 M"], [410, "CSI 0 S"], [456, "CSI 1"], [531, "CSI 2 M (NC)"], [577, "CSI CTRL (VCAM)"]],
  headsR: [[249, "RF"], [264, "FM"], [281, "GPS"], [301, "TSEN"], [330, "LVDSRF"], [428, "LVDSRF CTRL (VIO1V8)"], [450, "APCOUT"], [479, "CLK TEST"], [505, "CLK IN"], [531, "USB20"], [565, "DSI"], [646, "DSI CTRL (VIO1V8)"]],
  left: [[255, "ADI_SCLK", "B6", "ADI_SCK", 972], [261, "ADI_D", "F5", "ADI_D", 972], [269, "AUD_SCLK/SCLK/CLK", "AG2", "AUD_SCLK", 972], [275, "AUD_ADSYNC", "A5", "AUD_ADSYN", 972], [281, "AUD_ADD0/GPIO20", "C4", "AUD_ADD0", 972], [286, "AUD_DASYNC/WCI/GPIO22", "A3", "AUD_DASYN", 972], [292, "AUD_DAD0/GPIO23", "C5", "AUD_DA0", 972], [298, "AUD_DAD1", "D5", "AUD_DA1", 972], [307, "DCXO26M_EN", "C8", "DCXO26_EN", 972], [312, "XTL_BUF_EN0", "P5", "XTL_BUF_EN", 972], [318, "NC_XTL_BUF_EN1", "F3"], [324, "EXT_RST_B", "B4", "EXT_RST", 972], [329, "ANA_INT", "D3", "ANA_INT", 972], [335, "CHIP_SLEEP", "C3", "CHIP_SLP", 972], [341, "CLK_32K", "E4", "CLK_32K", 972], [355, "CLK26M_OUT", "J28", "CLK_26M", 972], [370, "CSI0_DP3", "L29", "MCSI_DATA3_P", 971], [375, "CSI0_DN3", "L30", "MCSI_DATA3_N", 971], [384, "CSI0_DP2", "M29"], [390, "CSI0_DN2", "M28"], [398, "CSI0_CKP", "N30", "MCSI_CK_P", 971], [404, "CSI0_CKN", "N29", "MCSI_CK_N", 971], [416, "CSI0_DP0", "P28"], [421, "CSI0_DN0", "P30"], [430, "CSI0_DP1", "R29"], [436, "CSI0_DN1", "R30"], [444, "CSI0_CKP2", "T28"], [450, "CSI0_CKN2", "T27"], [462, "CSI1_DP0", "U29", "SCAM_D0_P", 971], [467, "CSI1_DN0", "U28", "SCAM_D0_N", 971], [476, "CSI1_DP1", "V28", "SCAM_D1_P", 971], [482, "CSI1_DN1", "V30", "SCAM_D1_N", 971], [490, "CSI1_DP2", "T29"], [496, "CSI1_DN2", "T30"], [505, "CSI1_DP3", "M28"], [511, "CSI1_DN3", "M29"], [519, "CSI1_CKP", "R29", "SCAM_CKP", 971], [525, "CSI1_CKN", "R28", "SCAM_CKN", 971], [536, "NC_CSI2_DP0", "L30"], [542, "NC_CSI2_DN0", "L31"], [551, "NC_CSI2_DP1", "P28"], [556, "NC_CSI2_DN1", "P29"], [565, "NC_CSI2_CKP", "H29"], [571, "NC_CSI2_CKN", "H30"], [582, "CMMCLK0/CLK_AUX1/GPIO44", "G24"], [588, "CMMCLK1/GPIO45", "G28"], [597, "CMPD0/GPIO46", "F28", "CAM_PD0", 975], [602, "CMPD1/GPIO47", "F27", "CAM_PD1", 975], [608, "CMPD2/GPIO48", "E28"], [617, "CMRST0/GPIO43", "E27", "CAM_RST0", 975], [622, "CMRST1/GPIO42", "F29", "CAM_RST1", 975], [628, "CMRST2/GPIO41", "F30"], [637, "SCL0/GPIO39", "E30", "CAM_SCL", 975], [642, "SDA0/GPIO40", "E29", "CAM_SDA", 975], [651, "SCL1/EXTINT1/GPIO48", "F24", "CAM_SC1", 975], [657, "SDA1/EXTINT1/GPIO51", "F25", "CAM_SD1", 975]],
  right: [[255, "RF_PWR_T", "D29", "RFC_PWR", 1290, " "], [269, "FM_LANT", "K28", "FM_LANT", 1290, " "], [275, "FM_SANT", "K29"], [286, "GNSS_RF_IN", "B28", "GPS_RF_IN", 1290], [295, "GPIO_LNA_EN/GPIO26", "AJ29", "GPS_LNA", 1292], [307, "T_DIG/GPIO27", "C28"], [312, "TSEN_VREFP", "P25", "TSEN_VREFP", 1296], [318, "TSEN_IN", "P26", "TSEN_IN", 1296], [324, "TSEN_VREFN", "P24", "TSEN_VREFN", 1296], [335, "LVDSRF0_DL_PN_P", "D30", "LVDS_DL0_P", 1197], [341, "LVDSRF0_DL_PN_N", "E30", "LVDS_DL0_N", 1197], [350, "LVDSRF0_DL_DH_P", "F29", "LVDS_DL1_P", 1197], [355, "LVDSRF0_DL_DH_N", "F28", "LVDS_DL1_N", 1197], [364, "NC_LVDSRF1_DL_PN_P", "F31"], [370, "NC_LVDSRF1_DL_PN_N", "F30"], [378, "NC_LVDSRF1_DL_DH_P", "G28"], [384, "NC_LVDSRF1_DL_DH_N", "G31"], [393, "LVDSRF0_UL_P", "B29", "LVDS_UL0_P", 1197], [398, "LVDSRF0_UL_N", "B30", "LVDS_UL0_N", 1197], [407, "NC_LVDSRF1_UL_P", "E1"], [413, "NC_LVDSRF1_UL_N", "F2"], [421, "LVDSRF_REXT", "J6"], [436, "LVDSRF0_ADCON/SC_GPIO0", "B30"], [441, "LVDSRF0_DACON/SC_GPIO1", "D30"], [456, "APCOUT0", "J5", "RF_PA_RAMP", 1197], [464, "APCOUT1", "K2", "APC1", 1197], [473, "NC_APCOUT2", "K4"], [487, "CLKOUT_TEST_DPLL_NC", "AD27"], [496, "CLKOUT_TEST_MPLL", "E5"], [513, "CLK26M_IN", "A13", "CP_26M_IN", 1196], [522, "TEST_CLK26M_IN", "AC29"], [539, "USB_DP", "Y2", "USB_DP", 1196, " "], [545, "USB_DM", "Y1", "USB_DM", 1196, " "], [557, "USB_REXT", "P2"], [574, "DSI_DP0", "AE29", "MIPI_D0_P", 1201], [579, "DSI_DN0", "AE28", "MIPI_D0_N", 1201], [588, "DSI_DP1", "AC30", "MIPI_D1_P", 1201], [594, "DSI_DN1", "AC27", "MIPI_D1_N", 1201], [602, "DSI_DP2", "AB29"], [608, "DSI_DN2", "AB28"], [617, "DSI_DP3", "Y29"], [622, "DSI_DN3", "Y28"], [631, "DSI_CKP", "AA29", "MIPI_CKP", 1201], [637, "DSI_CKN", "AA28", "MIPI_CKN", 1201], [651, "LCM_RSTN/GPIO50", "B8", "LCM_RST", 1201], [657, "LCM_FMARK/GPIO51", "V5", "LCM_FMRK", 1201]]
});
text(1050, 387, "Front", "pin"); text(1050, 502, "Rear", "pin");
box(1091, 292, 1143, 298, "frame dark"); box(1091, 304, 1143, 310, "frame dark");
text(1093, 296, "[VSIM0]", "pin"); text(1093, 308, "[VSIM0]", "pin");

// Antenna matching, thermistor and bias parts
for (const [x, t, b] of [[1154, 218, 255], [1177, 218, 255], [1200, 228, 269], [1226, 228, 286], [1257, 228, 286]])
  path(`M${x - 2} ${t}h5M${x} ${t}V${b}`, "wire");
box(1152, 216, 1158, 251, "hot"); box(1177, 222, 1204, 240, "hot"); box(1226, 232, 1246, 252, "hot"); box(1257, 232, 1274, 252, "hot");
vtext(1153, 248, "C0215 || 0201,NC"); vtext(1199, 258, "C0216 || 0201,NC");
text(1179, 236, "L0204", "pin"); text(1179, 240, "4.7nH,NC", "pin");
text(1160, 249, "L0207", "pin"); text(1160, 253, "22nH", "pin");
text(1229, 242, "L0201", "pin"); text(1229, 246, "22nH", "pin"); text(1260, 242, "L0202", "pin"); text(1260, 246, "0201,NC", "pin");
box(1150, 273, 1183, 278, "mark"); text(1152, 276, "C0211 || 0201,NC", "pin"); text(1174, 268, "L0206,_0201,27nH", "pin");
box(1230, 285, 1259, 290, "mark"); text(1229, 290, "C0201 || 1nF", "pin");
box(1152, 289, 1183, 294, "mark"); text(1153, 293, "R0203 ,,,20K,NC", "pin");
box(1195, 314, 1235, 324, "mark"); text(1197, 318, "C0217 || 0201,1nF", "pin"); text(1197, 324, "C0218 || 0201,1nF", "pin");
path("M1143 318h153M1174 312v9h61v-6h-61", "frame dark");
box(1269, 321, 1275, 354, "mark"); path("M1272 321v33", "wire dark"); path("M1270 334h4l-4 4h4z", "dark"); vtext(1271, 352, "NC_0402  R0204");
box(1153, 418, 1191, 423, "mark"); path("M1143 421h48", "wire"); text(1155, 420, "R0206 ~~ 0201,1K,NC", "pin");
box(1152, 554, 1191, 559, "mark"); path("M1143 557h48", "wire"); text(1153, 556, "R0210 ~~ 0201,1K,NC", "pin");
for (const [y, n] of [[574, 0], [585, 1]]) {
  box(945, y - 9, 978, y, "mark"); text(948, y - 6, "33PF || C0220", "pin");
  box(983, y - 5, 1014, y, "mark"); text(985, y - 1, "R021" + n + " ~~ 33R", "pin");
  path(`M942 ${y}H1016V${n ? 588 : 582}h12M977 ${y}v-5`, "wire"); tag(937, y);
  text(936, y + 2, "CAM_CK" + n, "net end"); text(918, y + 1, "(8)", "pin end");
}
for (const [x, y] of [[1329, 260], [1316, 269], [1236, 543], [1235, 549]]) text(x, y, "(3)", "pin");

// Lower boxes: fiducials, test points and mounting marks
box(422, 794, 491, 820, "frame dark");
for (let i = 0; i < 4; i++) {
  const x = 437 + i * 14;
  box(x - 6, 801, x + 6, 817, "hot"); ring(x, 809, 6);
  path(`M${x - 3} 809h6M${x} 806v3`, "wire"); text(x, 803, "MARK" + (i + 1), "pin mid"); text(x, 818, "MARK" + (i + 1), "pin mid");
}
box(597, 751, 749, 820, "frame dark");
box(610, 758, 624, 803, "hot"); box(686, 755, 699, 816, "hot"); box(700, 771, 717, 781, "hot");
const point = (x, y, tx, name, page, px) => {
  ring(x, y, 3); path(`M${x + 3} ${y}H${tx}`, "wire"); tag(tx, y);
  text(tx + 6, y + 2, name, "net"); text(px, y, page, "pin"); text(x, y + 5, "TP02" + (y % 30), "pin mid");
};
[[763, "U0RXD_T"], [771, "U0TXD_T"], [780, "BT_TCK"], [789, "BT_TMS"], [797, "LTE_DBG"]].forEach(([y, n]) => { point(614, y, 632, n, "(3)", 657); text(619, y - 1, "AD200", "pin"); });
[[760, "VBAT", "1,2,3,5,8", 735], [769, "VBUS", "10,11", 737], [786, "BAND1_D", "(10)", 746], [795, "USB_DP", "1,3,8", 743], [803, "USB_DM", "1,3,8", 743], [812, "RESET_B", "(10)", 746]].forEach(([y, n, p, px]) => point(692, y, 716, n, p, px));
ring(692, 777, 3); ring(706, 777, 3);
path("M695 777h8M709 777h5M716 774v6", "wire"); text(701, 773, "TP0204", "pin");
for (const x of [824, 853]) {
  box(x - 7, 780, x + 7, 793, "hot"); ring(x, 786, 6);
  out.push(`<circle cx="${x}" cy="786" r="3" fill="#777"/>`);
  path(`M${x - 5} 786h10M${x} 781v17M${x - 3} 797h6`, "wire"); text(x - 8, 787, "M", "pin");
}

// Title block
path("M1128 826V791H1191V783H1349M1191 783v43M1217 783v43M1191 791H1349M1128 809H1191M1191 803H1349M1191 814H1349", "frame dark");
text(1196, 789, "Company", "sign"); text(1256, 789, "Document", "sign"); text(1131, 798, "Designer", "sign"); text(1160, 798, "Date1", "sign");
text(1197, 801, "Title", "sign"); text(1257, 801, "MB207", "sign"); text(1131, 813, "Checker", "sign"); text(1160, 813, "Date2", "sign"); text(1197, 812, "Rev", "sign");

document.getElementById("sheet").innerHTML = out.join("");
```
